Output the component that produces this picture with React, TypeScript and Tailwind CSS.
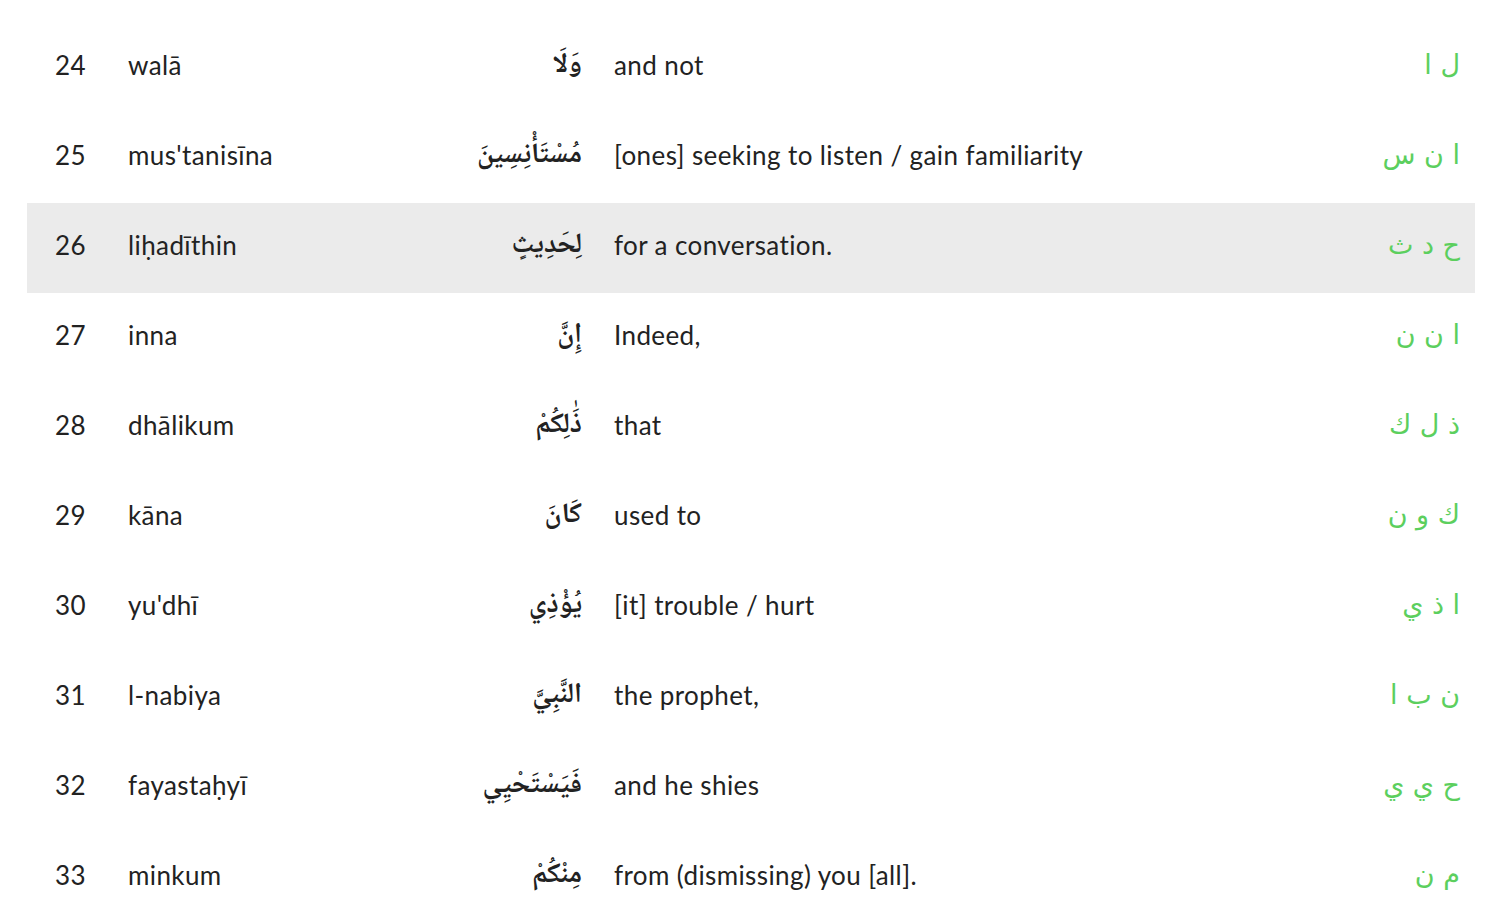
const rows = [
  { n: 24, tr: 'walā', ar: 'وَلَا', en: 'and not', root: 'ل ا' },
  { n: 25, tr: "mus'tanisīna", ar: 'مُسْتَأْنِسِينَ', en: '[ones] seeking to listen / gain familiarity', root: 'ا ن س' },
  { n: 26, tr: 'liḥadīthin', ar: 'لِحَدِيثٍ', en: 'for a conversation.', root: 'ح د ث', active: true },
  { n: 27, tr: 'inna', ar: 'إِنَّ', en: 'Indeed,', root: 'ا ن ن' },
  { n: 28, tr: 'dhālikum', ar: 'ذَٰلِكُمْ', en: 'that', root: 'ذ ل ك' },
  { n: 29, tr: 'kāna', ar: 'كَانَ', en: 'used to', root: 'ك و ن' },
  { n: 30, tr: "yu'dhī", ar: 'يُؤْذِي', en: '[it] trouble / hurt', root: 'ا ذ ي' },
  { n: 31, tr: 'l-nabiya', ar: 'النَّبِيَّ', en: 'the prophet,', root: 'ن ب ا' },
  { n: 32, tr: 'fayastaḥyī', ar: 'فَيَسْتَحْيِي', en: 'and he shies', root: 'ح ي ي' },
  { n: 33, tr: 'minkum', ar: 'مِنْكُمْ', en: 'from (dismissing) you [all].', root: 'م ن' },
]

export default function App() {
  return (
    <div className="min-h-screen bg-white pt-[23px] pl-[27px] pr-[17px] font-['Lato','Noto_Sans',sans-serif] text-[#222] text-[26px] tracking-[0.4px]">
      {rows.map((r) => (
        <div
          key={r.n}
          className={`flex h-[90px] items-center pb-[5px] ${r.active ? 'bg-[#ebebeb]' : ''}`}
        >
          <div className="w-[101px] pl-[28px] shrink-0">{r.n}</div>
          <div className="w-[454px] shrink-0 flex items-center justify-between">
            <span>{r.tr}</span>
            <span dir="rtl" className="font-['Noto_Naskh_Arabic','DejaVu_Sans',serif] font-bold text-[28px] tracking-normal">
              {r.ar}
            </span>
          </div>
          <div className="flex-1 ml-[32px]">{r.en}</div>
          <div dir="rtl" className="pr-[15px] text-[#5ccf5e] text-[27px] tracking-normal font-['DejaVu_Sans',sans-serif]">
            {r.root}
          </div>
        </div>
      ))}
    </div>
  )
}
